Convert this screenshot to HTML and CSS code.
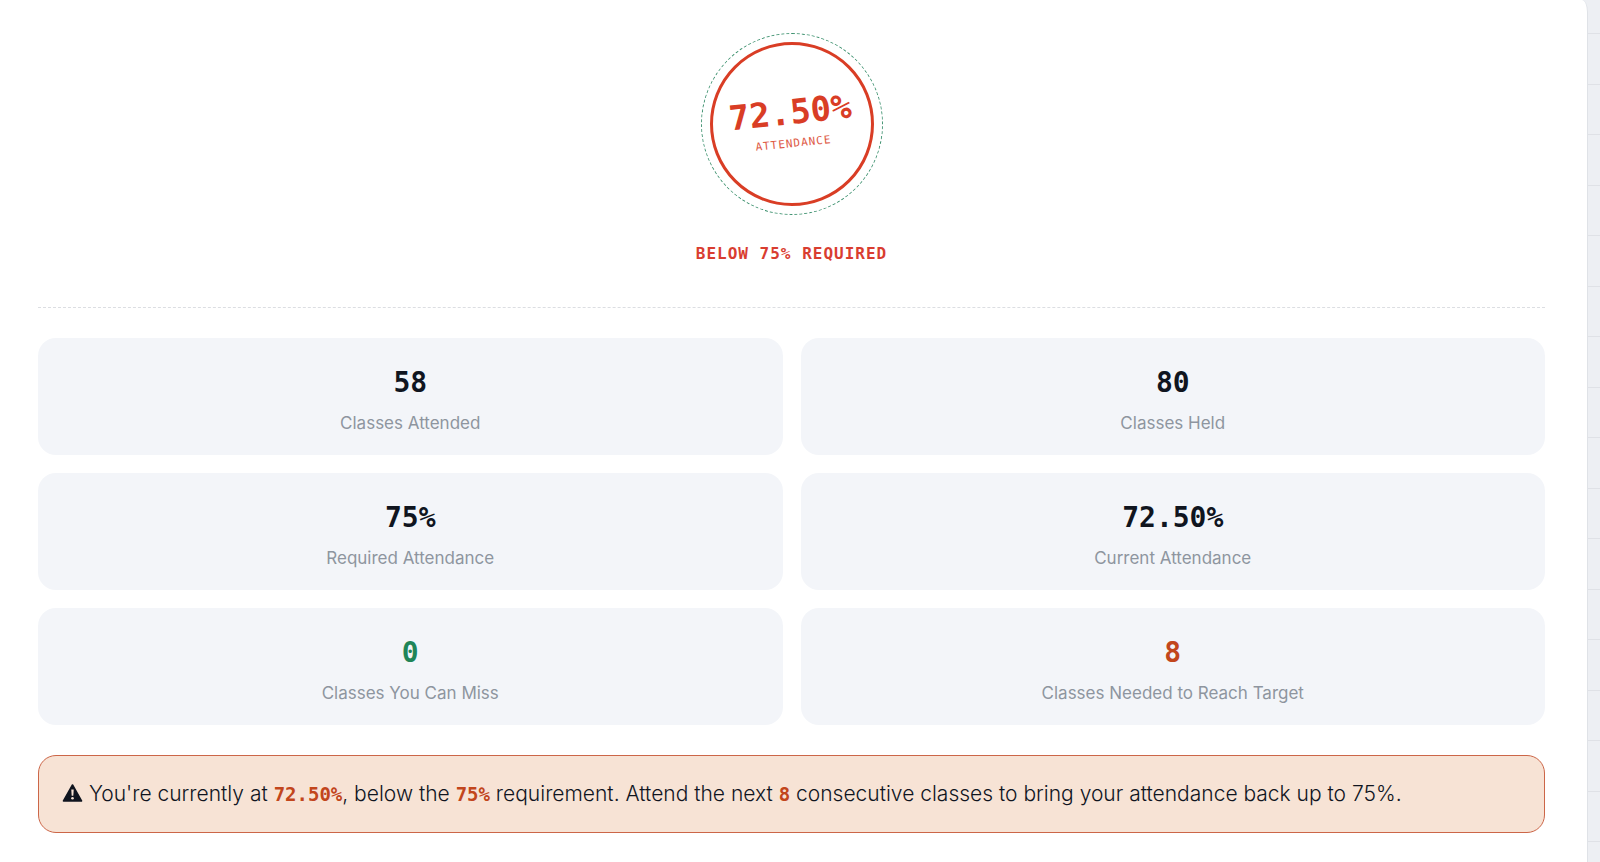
FILE: index.html
```html
<!DOCTYPE html>
<html lang="en">
<head>
    <meta charset="UTF-8">
    <meta name="viewport" content="width=device-width, initial-scale=1.0">
    <title>Attendance Calculator</title>
    <link rel="stylesheet" href="styles.css">
</head>

<body>
    <main class="result-card">
        <!-- attendance stamp -->
        <section class="stamp-section">
            <div class="stamp">
                <div class="stamp-text">
                    <div class="stamp-value">72.50%</div>
                    <div class="stamp-label">ATTENDANCE</div>
                </div>
            </div>
            <p class="status">BELOW 75% REQUIRED</p>
        </section>

        <!-- stats -->
        <section class="stats">
            <div class="stat">
                <div class="stat-value">58</div>
                <div class="stat-label">Classes Attended</div>
            </div>
            <div class="stat">
                <div class="stat-value">80</div>
                <div class="stat-label">Classes Held</div>
            </div>
            <div class="stat">
                <div class="stat-value">75%</div>
                <div class="stat-label">Required Attendance</div>
            </div>
            <div class="stat">
                <div class="stat-value">72.50%</div>
                <div class="stat-label">Current Attendance</div>
            </div>
            <div class="stat">
                <div class="stat-value safe">0</div>
                <div class="stat-label">Classes You Can Miss</div>
            </div>
            <div class="stat">
                <div class="stat-value danger">8</div>
                <div class="stat-label">Classes Needed to Reach Target</div>
            </div>
        </section>

        <!-- message -->
        <p class="message">
            <svg class="message-icon" viewBox="0 0 20 18" aria-hidden="true">
                <path d="M10 1 L19 17 H1 Z" fill="#10151f" stroke="#10151f" stroke-width="1.6" stroke-linejoin="round"/>
                <path d="M8.8 5.6 H11.2 L10.8 11.8 H9.2 Z" fill="#f7e3d5"/>
                <circle cx="10" cy="14.3" r="1.3" fill="#f7e3d5"/>
            </svg>
            You're currently at <strong>72.50%</strong>, below the <strong>75%</strong> requirement. Attend the next <strong>8</strong> consecutive classes to bring your attendance back up to 75%.
        </p>
    </main>
</body>
</html>
```
FILE: styles.css
```css
* {
    box-sizing: border-box;
}

/* ruled paper background */
body {
    margin: 0;
    min-height: 100vh;
    display: flex;
    font-family: "Inter", sans-serif;
    color: #10151f;
    background-color: #edeff3;
    background-image:
        linear-gradient(#dfe1e6 1px, transparent 1px),
        linear-gradient(#dfe1e6 1px, transparent 1px);
    background-size: 100% 101px;
    background-position: 0 33px, 0 84px;
}

.result-card {
    flex: 1;
    margin-right: 12px;
    padding: 42px 42px 28px 38px;
    background-color: #fff;
    border-right: 1px solid #dfe2e7;
    border-top-right-radius: 6px 12px;
}

/* stamp */
.stamp-section {
    display: flex;
    flex-direction: column;
    align-items: center;
    padding-bottom: 41px;
    border-bottom: 1px dashed #dcdee2;
}

.stamp {
    position: relative;
    display: flex;
    justify-content: center;
    align-items: center;
    width: 164px;
    height: 164px;
    border: 3px solid #d93d25;
    border-radius: 50%;
    color: #d93d25;
}

.stamp::before {
    content: "";
    position: absolute;
    inset: -12px;
    border: 1px dashed #3f9270;
    border-radius: 50%;
}

.stamp-text {
    text-align: center;
    font-family: "DejaVu Sans Mono", monospace;
    transform: rotate(-6deg);
}

.stamp-value {
    font-size: 34px;
    font-weight: 700;
    line-height: 36px;
}

.stamp-label {
    margin-top: 4px;
    font-size: 11px;
    line-height: 20px;
    letter-spacing: 1px;
    opacity: 0.85;
}

.status {
    margin: 36px 0 0;
    font-family: "DejaVu Sans Mono", monospace;
    font-size: 16px;
    font-weight: 700;
    line-height: 24px;
    letter-spacing: 1px;
    color: #d93d30;
}

/* stats */
.stats {
    display: grid;
    grid-template-columns: 1fr 1fr;
    gap: 18px;
    margin-top: 30px;
}

.stat {
    padding: 26px 18px 19px;
    border-radius: 18px;
    background-color: #f3f5f9;
    text-align: center;
}

.stat-value {
    font-family: "DejaVu Sans Mono", monospace;
    font-size: 28px;
    font-weight: 700;
    line-height: 38px;
}

.stat-label {
    margin-top: 8px;
    font-size: 17px;
    line-height: 26px;
    color: #8e959f;
}

.safe {
    color: #1f8558;
}

.danger {
    color: #c2461c;
}

/* message */
.message {
    margin: 30px 0 0;
    padding: 21px 23px;
    border: 1px solid #cc6648;
    border-radius: 18px;
    background-color: #f7e3d5;
    font-size: 21px;
    font-weight: 300;
    line-height: 34px;
}

.message-icon {
    width: 21px;
    height: 18px;
    vertical-align: -1px;
}

.message strong {
    font-family: "DejaVu Sans Mono", monospace;
    font-size: 19px;
    font-weight: 700;
    line-height: 1;
    color: #c2461c;
}
```
